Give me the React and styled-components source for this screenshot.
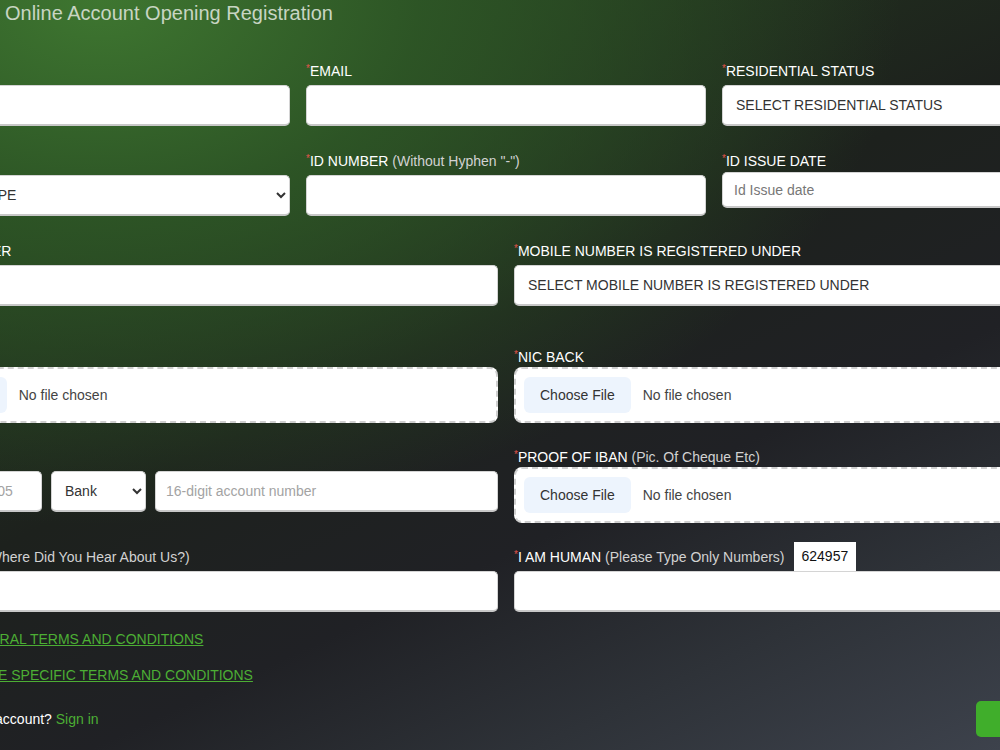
import React from 'react';
import styled, { createGlobalStyle } from 'styled-components';

const GlobalStyle = createGlobalStyle`
  html, body {
    margin: 0;
    padding: 0;
  }
  body {
    font-family: "Liberation Sans", Arial, sans-serif;
    overflow: hidden;
  }
`;

const Page = styled.div`
  width: 1000px;
  height: 750px;
  overflow: hidden;
  background:
    radial-gradient(ellipse 80% 70% at 10% 0%, rgba(62, 118, 48, 1) 0%, rgba(46, 88, 38, 0.9) 40%, rgba(30, 40, 30, 0) 100%),
    linear-gradient(155deg, #26421f 0%, #1d211d 45%, #202125 65%, #2e3238 82%, #3d424c 100%);
`;

const Title = styled.h2`
  margin: 0;
  padding: 1px 0 0 5px;
  font-size: 20px;
  line-height: 24px;
  font-weight: 400;
  color: #c8d5c3;
`;

// the page is scrolled sideways: the form starts left of the window
const Form = styled.form`
  width: 1232px;
  margin: 36px 0 0 -110px;
`;

const Row = styled.div`
  display: grid;
  grid-template-columns: repeat(${props => props.$cols}, 1fr);
  column-gap: 16px;
  margin-bottom: ${props => props.$after}px;
`;

const Field = styled.div`
  min-width: 0;
`;

const Label = styled.label`
  display: block;
  font-size: 14px;
  line-height: 20px;
  color: #fff;
  white-space: nowrap;
  margin-bottom: ${props => props.$gap ?? 4}px;
`;

const Req = styled.span`
  color: #e0534c;
  font-size: 10px;
  vertical-align: top;
  line-height: 15px;
`;

const Hint = styled.span`
  color: #d2d2d2;
`;

const LabelRow = styled.div`
  display: flex;
  align-items: center;
  height: 29px;
`;

const Captcha = styled.span`
  height: 29px;
  line-height: 29px;
  padding: 0 8px;
  margin-left: 9px;
  background: #fff;
  color: #111;
  font-size: 14px;
`;

const TextInput = styled.input`
  box-sizing: border-box;
  display: block;
  width: ${props => (props.$w ? `${props.$w}px` : '100%')};
  flex: ${props => (props.$w ? 'none' : '1')};
  height: ${props => props.$h ?? 41}px;
  padding: 0 ${props => props.$pad ?? 12}px;
  border: 1px solid #d4d4d4;
  border-bottom: 2px solid #c8c8c8;
  border-radius: 5px;
  background: #fff;
  font: 14px "Liberation Sans", Arial, sans-serif;
  color: #333;
  outline: none;

  &::placeholder {
    color: ${props => (props.$muted ? '#a3a3a3' : '#777')};
  }
`;

const Select = styled.select`
  box-sizing: border-box;
  display: block;
  width: ${props => (props.$w ? `${props.$w}px` : '100%')};
  flex: none;
  height: 41px;
  padding: 0 6px 0 9px;
  border: 1px solid #d4d4d4;
  border-bottom: 2px solid #c8c8c8;
  border-radius: 5px;
  background: #fff;
  font: 14px "Liberation Sans", Arial, sans-serif;
  color: #333;
  outline: none;
`;

const FileInput = styled.input.attrs({ type: 'file' })`
  box-sizing: border-box;
  display: block;
  width: 100%;
  padding: 8px;
  border: 2px dashed #cfcfcf;
  border-radius: 8px;
  background: #fff;
  font: 14px "Liberation Sans", Arial, sans-serif;
  color: #444;

  &::file-selector-button {
    height: 36px;
    padding: 0 16px;
    margin-right: 12px;
    border: none;
    border-radius: 6px;
    background: #edf4fd;
    color: #333;
    font: 14px "Liberation Sans", Arial, sans-serif;
  }
`;

const IbanGroup = styled.div`
  display: flex;
  gap: 9px;
  padding-top: 4px;
`;

const Terms = styled.div`
  display: flex;
  flex-direction: column;
  gap: 16px;
  margin-top: 17px;
`;

const CheckLine = styled.label`
  display: flex;
  align-items: center;
  height: 20px;
  font-size: 14px;
  color: #fff;
  white-space: pre;

  input {
    margin: 0 3px 0 1px;
  }
`;

const TermsLink = styled.a`
  color: #4cae34;
  text-decoration: underline;
`;

const Footer = styled.div`
  display: flex;
  justify-content: space-between;
  align-items: center;
  margin-top: 16px;
  height: 36px;
`;

const SignIn = styled.p`
  margin: 0;
  font-size: 14px;
  color: #fff;

  a {
    color: #4cae34;
    text-decoration: none;
  }
`;

const SubmitButton = styled.button`
  height: 36px;
  padding: 0 47px;
  border: none;
  border-radius: 5px;
  background: #40ae2b;
  color: #fff;
  font: 14px "Liberation Sans", Arial, sans-serif;
`;

const FieldLabel = ({ text, hint, gap }) => (
  <Label $gap={gap}>
    <Req>*</Req>
    {text}
    {hint && <Hint> {hint}</Hint>}
  </Label>
);

export default function App() {
  return (
    <Page>
      <GlobalStyle />
      <Title>Online Account Opening Registration</Title>
      <Form onSubmit={e => e.preventDefault()}>
        <Row $cols={3} $after={25}>
          <Field>
            <FieldLabel text="FULL NAME" />
            <TextInput type="text" />
          </Field>
          <Field>
            <FieldLabel text="EMAIL" />
            <TextInput type="email" />
          </Field>
          <Field>
            <FieldLabel text="RESIDENTIAL STATUS" />
            <Select defaultValue="">
              <option value="">SELECT RESIDENTIAL STATUS</option>
              <option>RESIDENT</option>
              <option>NON-RESIDENT</option>
            </Select>
          </Field>
        </Row>

        <Row $cols={3} $after={25}>
          <Field>
            <FieldLabel text="ID TYPE" />
            <Select defaultValue="">
              <option value="">SELECT ID TYPE</option>
              <option>CNIC</option>
              <option>NICOP</option>
            </Select>
          </Field>
          <Field>
            <FieldLabel text="ID NUMBER" hint={'(Without Hyphen "-")'} />
            <TextInput type="text" />
          </Field>
          <Field>
            <FieldLabel text="ID ISSUE DATE" gap={1} />
            <TextInput type="text" placeholder="Id Issue date" $h={36} $pad={11} />
          </Field>
        </Row>

        <Row $cols={2} $after={41}>
          <Field>
            <FieldLabel text="MOBILE NUMBER" />
            <TextInput type="tel" />
          </Field>
          <Field>
            <FieldLabel text="MOBILE NUMBER IS REGISTERED UNDER" />
            <Select defaultValue="">
              <option value="">SELECT MOBILE NUMBER IS REGISTERED UNDER</option>
              <option>SELF</option>
              <option>FAMILY MEMBER</option>
            </Select>
          </Field>
        </Row>

        <Row $cols={2} $after={24}>
          <Field>
            <FieldLabel text="NIC FRONT" gap={0} />
            <FileInput />
          </Field>
          <Field>
            <FieldLabel text="NIC BACK" gap={0} />
            <FileInput />
          </Field>
        </Row>

        <Row $cols={2} $after={19}>
          <Field>
            <FieldLabel text="IBAN" gap={0} />
            <IbanGroup>
              <TextInput type="text" placeholder="2 Check Digits 05" $w={152} $muted />
              <Select defaultValue="bank" $w={95}>
                <option value="bank">Bank</option>
              </Select>
              <TextInput type="text" placeholder="16-digit account number" $pad={10} $muted />
            </IbanGroup>
          </Field>
          <Field>
            <FieldLabel text="PROOF OF IBAN" hint="(Pic. Of Cheque Etc)" gap={0} />
            <FileInput />
          </Field>
        </Row>

        <Row $cols={2} $after={0}>
          <Field>
            <LabelRow>
              <FieldLabel text="REFERENCE" hint="(Where Did You Hear About Us?)" gap={0} />
            </LabelRow>
            <TextInput type="text" />
          </Field>
          <Field>
            <LabelRow>
              <FieldLabel text="I AM HUMAN" hint="(Please Type Only Numbers)" gap={0} />
              <Captcha>624957</Captcha>
            </LabelRow>
            <TextInput type="text" />
          </Field>
        </Row>

        <Terms>
          <CheckLine>
            <input type="checkbox" />
            {'I accept '}
            <TermsLink href="#">GENERAL TERMS AND CONDITIONS</TermsLink>
          </CheckLine>
          <CheckLine>
            <input type="checkbox" />
            {'I accept '}
            <TermsLink href="#">TRADE SPECIFIC TERMS AND CONDITIONS</TermsLink>
          </CheckLine>
        </Terms>

        <Footer>
          <SignIn>
            Already have an account? <a href="#">Sign in</a>
          </SignIn>
          <SubmitButton type="submit">Register</SubmitButton>
        </Footer>
      </Form>
    </Page>
  );
}
